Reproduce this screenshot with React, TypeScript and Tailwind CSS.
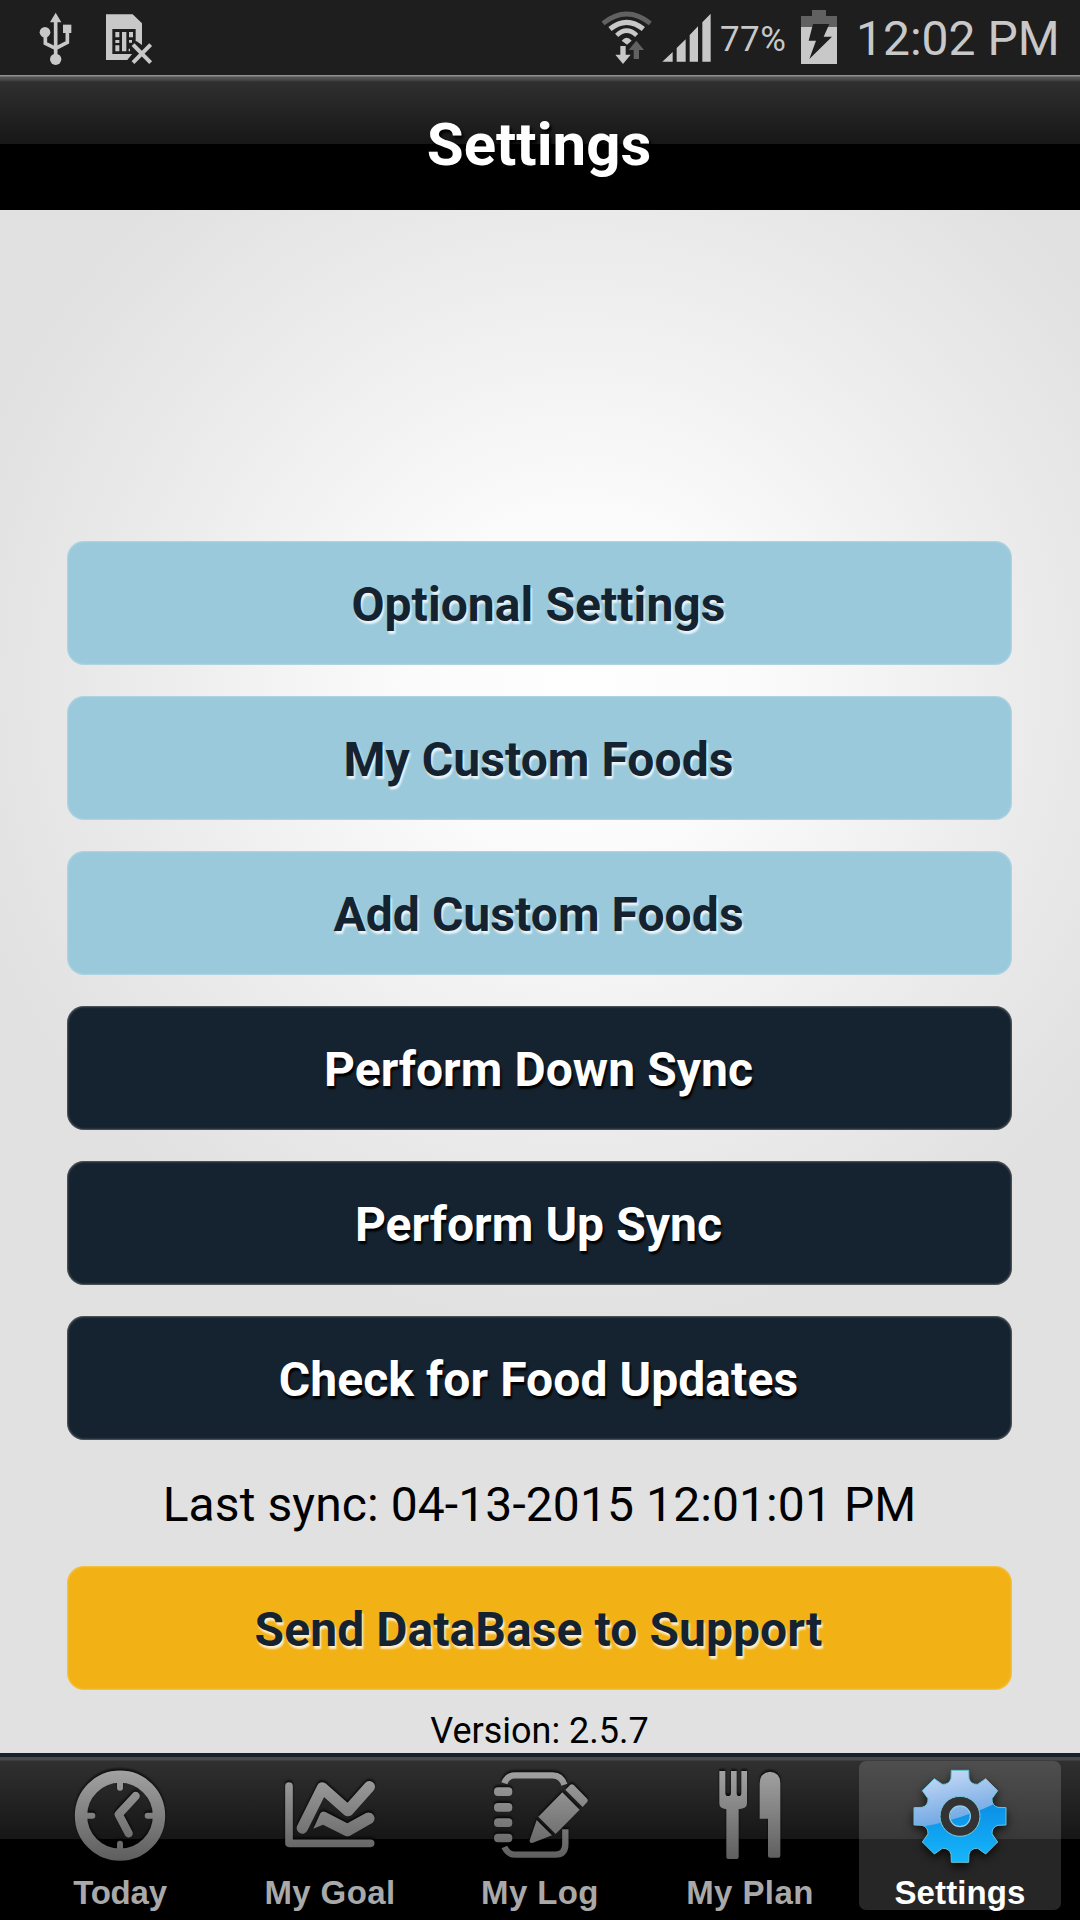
import React from "react";

type Tone = "blue" | "navy" | "amber";

const tones: Record<Tone, string> = {
  blue: "bg-[#99c9db] text-[#152330] [text-shadow:1.5px_2.5px_2px_rgba(255,255,255,0.8)] shadow-[inset_0_0_2px_1px_rgba(255,255,255,0.25)]",
  navy: "bg-[#152330] text-white [text-shadow:1.5px_2.5px_2px_#000] shadow-[inset_0_0_2px_1px_rgba(160,155,150,0.5)]",
  amber:
    "bg-[#f2b215] text-[#152330] [text-shadow:1.5px_2.5px_2px_rgba(255,255,255,0.8)] shadow-[inset_0_0_2px_1px_rgba(255,255,255,0.25)]",
};

function ActionButton({ tone, children }: { tone: Tone; children: React.ReactNode }) {
  return (
    <button
      className={`flex h-[124px] w-full shrink-0 items-center justify-center whitespace-nowrap rounded-[17px] pr-[2px] pt-[3px] text-[48px] font-bold leading-none tracking-[0.07px] ${tones[tone]}`}
    >
      {children}
    </button>
  );
}

function UsbIcon() {
  return (
    <svg className="h-14 w-9" viewBox="114 33 108 168" fill="none" stroke="#c8c8c8" strokeWidth="11">
      <path d="M167 60V170M136 100V130L167 145L202 127V92" />
      <path d="M167 38L184 67H150Z" fill="#c8c8c8" stroke="none" />
      <circle cx="135" cy="97" r="16" fill="#c8c8c8" stroke="none" />
      <rect x="189" y="74" width="25" height="25" fill="#c8c8c8" stroke="none" />
      <circle cx="167" cy="178" r="17" fill="#c8c8c8" stroke="none" />
    </svg>
  );
}

function SimOffIcon() {
  return (
    <svg className="h-[52px] w-12" viewBox="315 39 144 156">
      <path d="M318 43H398L426 70V135L410 124L397 124L394 130L398 160L382 180H318Z" fill="#c8c8c8" />
      <rect x="337" y="87" width="70" height="75" fill="#1e1e1e" />
      <path
        d="M346 96h12v16h-12zM346 120h12v9h-12zM346 136h12v18h-12zM366 96h13v58h-13zM387 96h12v16h-12zM387 120h9v8h-9zM386 146h4v8h-4z"
        fill="#c8c8c8"
      />
      <path d="M400 133L452 188M452 133L400 188" stroke="#1e1e1e" strokeWidth="20" />
      <path d="M399 134L452 188M452 134L399 188" stroke="#c8c8c8" strokeWidth="12" />
    </svg>
  );
}

function WifiIcon() {
  return (
    <svg className="h-[55px] w-[52px]" viewBox="64 30 156 165" fill="none">
      <path d="M70 70Q141 14 212 70" stroke="#616161" strokeWidth="14" />
      <path d="M91 87Q141 47 191 87" stroke="#c8c8c8" strokeWidth="15" />
      <path d="M111 106Q141 78 171 106" stroke="#c8c8c8" strokeWidth="14" />
      <path d="M126 122Q141 105 156 122L142 134Z" fill="#c8c8c8" />
      <path d="M122 138h16v26h15L130 192L107 164h15z" fill="#c8c8c8" />
      <path d="M170 122L193 150H178V177H162V150H147Z" fill="#616161" />
    </svg>
  );
}

function SignalIcon() {
  return (
    <svg className="h-[49px] w-[49px]" viewBox="247 40 147 147" fill="#c8c8c8">
      <path d="M248 186L279 157V186ZM291 145L318 119V186H291ZM330 106L355 80V186H330ZM368 68L393 42V186H368Z" />
    </svg>
  );
}

function BatteryIcon() {
  return (
    <svg className="h-[54px] w-9" viewBox="663 30 108 162">
      <path d="M696 30H738V48H771V81H663V48H696Z" fill="#616161" />
      <rect x="663" y="81" width="108" height="111" fill="#c8c8c8" />
      <path d="M699 72H748L731 110H756L688 177L708 122H686Z" fill="#1e1e1e" />
    </svg>
  );
}

function Metal({ id }: { id: string }) {
  return (
    <defs>
      <linearGradient id={id} gradientUnits="userSpaceOnUse" x1="0" y1="90" x2="0" y2="360">
        <stop offset="0" stopColor="#a2a2a2" />
        <stop offset="1" stopColor="#5e5e5e" />
      </linearGradient>
    </defs>
  );
}

const iconClass = "h-[100px] w-[100px] shrink-0 [filter:drop-shadow(0_-2px_1px_rgba(0,0,0,0.75))]";

function TodayIcon() {
  return (
    <svg className={iconClass} viewBox="210 78 300 300" fill="none" stroke="url(#m1)">
      <Metal id="m1" />
      <circle cx="360" cy="227" r="117" strokeWidth="37" />
      <path
        d="M351 120H369V143A9 9 0 0 1 351 143ZM351 334H369V311A9 9 0 0 0 351 311ZM255 218V236H277A9 9 0 0 0 277 218ZM465 218V236H443A9 9 0 0 1 443 218Z"
        fill="url(#m1)"
        stroke="none"
      />
      <path d="M407 168L356 223L386 280" strokeWidth="25" strokeLinecap="round" strokeLinejoin="round" />
    </svg>
  );
}

function GoalIcon() {
  return (
    <svg className={iconClass} viewBox="150 78 300 300" fill="none" stroke="url(#m2)" strokeLinecap="round" strokeLinejoin="round">
      <Metal id="m2" />
      <path d="M177 138V310H422" strokeWidth="23" />
      <path d="M217 264L277 144L354 212L418 140" strokeWidth="34" />
      <path
        d="M250 266L271 220Q277 211 288 217L352 250L408 219C426 211 443 233 428 248L360 287Q353 291 345 287L279 254Z"
        fill="url(#m2)"
        stroke="none"
      />
    </svg>
  );
}

function LogIcon() {
  return (
    <svg className={iconClass} viewBox="150 78 300 300" fill="url(#m3)">
      <Metal id="m3" />
      <path
        d="M193 130Q201 106 225 106H338Q364 106 373 134M193 321Q204 344 225 344H346Q376 344 376 312V268"
        fill="none"
        stroke="url(#m3)"
        strokeWidth="19"
      />
      <rect x="162" y="142" width="55" height="26" rx="12" />
      <rect x="162" y="189" width="55" height="26" rx="12" />
      <rect x="162" y="235" width="55" height="26" rx="12" />
      <rect x="162" y="281" width="55" height="26" rx="12" />
      <path d="M376 149L390 135Q396 130 402 136L440 175Q446 181 441 187L428 201Z" />
      <path d="M367 157L419 209L347 282L295 230Z" />
      <path d="M290 240L336 286L277 309Q268 310 269 301Z" />
    </svg>
  );
}

function PlanIcon() {
  return (
    <svg className={iconClass} viewBox="150 78 300 300" fill="url(#m4)">
      <Metal id="m4" />
      <path d="M208 93H226V158Q226 168 234 168Q243 168 243 158V93H260V158Q260 168 267 168Q274 168 274 158V93H291V190Q291 206 266 208V350Q266 357 258 357H237Q229 357 229 350V208Q208 206 208 190Z" />
      <path d="M329 236V130Q330 97 360 95Q391 97 391 130V347Q391 353 385 353H360Q354 353 354 347V236Z" />
    </svg>
  );
}

const gearPath =
  "M-26-138H26L27-114Q32-95 53-96L77-113L113-77L96-53Q95-32 114-27L138-26V26L114 27Q95 32 96 53L113 77L77 113L53 96Q32 95 27 114L26 138H-26L-27 114Q-32 95-53 96L-77 113L-113 77L-96 53Q-95 32-114 27L-138 26V-26L-114-27Q-95-32-96-53L-113-77L-77-113L-53-96Q-32-95-27-114Z";

function GearIcon() {
  return (
    <svg
      className="h-[100px] w-[100px] shrink-0 overflow-visible [filter:drop-shadow(0_4px_5px_rgba(0,0,0,0.7))]"
      viewBox="-150 -151 300 300"
    >
      <defs>
        <linearGradient id="gloss" x1="0" y1="0" x2="0.3" y2="1">
          <stop offset="0" stopColor="#d0e0f8" />
          <stop offset="0.65" stopColor="#86b4e8" />
          <stop offset="1" stopColor="#5b9fe2" />
        </linearGradient>
        <linearGradient id="deep" x1="0" y1="0" x2="0" y2="1">
          <stop offset="0" stopColor="#0a8be4" />
          <stop offset="1" stopColor="#16b6fb" />
        </linearGradient>
        <clipPath id="gear">
          <path d={gearPath} />
        </clipPath>
      </defs>
      <g clipPath="url(#gear)">
        <rect x="-140" y="-140" width="280" height="200" fill="url(#gloss)" />
        <path d="M-140 36Q0 14 140-54V140H-140Z" fill="url(#deep)" />
      </g>
      <path d={gearPath} fill="none" stroke="#6cc4d8" strokeWidth="3" />
      <circle r="45" fill="none" stroke="#333333" strokeWidth="30" />
      <circle r="60" fill="none" stroke="#78cfe0" strokeWidth="3" />
      <circle r="31" fill="none" stroke="#8fd0ec" strokeWidth="4" />
    </svg>
  );
}

function Tab({
  label,
  active,
  tracking = "tracking-[0.4px]",
  children,
}: {
  label: string;
  active?: boolean;
  tracking?: string;
  children: React.ReactNode;
}) {
  return (
    <div
      className={`flex h-[149px] w-[202px] flex-col items-center rounded-[7px] pt-[5px] font-['Liberation_Sans',sans-serif] text-[33px] font-bold leading-[34px] ${tracking} ${
        active ? "bg-white/15 text-white" : "text-[#a9a9a9]"
      }`}
    >
      {children}
      <span className="mt-[10px] whitespace-nowrap">{label}</span>
    </div>
  );
}

export default function App() {
  return (
    <div className="flex h-[1920px] w-[1080px] flex-col overflow-hidden bg-black font-['Roboto',sans-serif]">
      <div className="flex h-[75px] shrink-0 bg-[#1e1e1e] text-[#c8c8c8]">
        <div className="ml-[38px] mt-[11px]">
          <UsbIcon />
        </div>
        <div className="ml-[31px] mt-[13px]">
          <SimOffIcon />
        </div>
        <div className="ml-auto mt-[10px]">
          <WifiIcon />
        </div>
        <div className="ml-[9px] mt-[13px]">
          <SignalIcon />
        </div>
        <span className="ml-[9px] mt-[20px] w-[81px] whitespace-nowrap text-[35px] leading-10 tracking-[0.4px]">77%</span>
        <div className="mt-[10px]">
          <BatteryIcon />
        </div>
        <span className="ml-[19px] mt-[14px] w-[224px] whitespace-nowrap text-[48px] leading-[50px]">12:02 PM</span>
      </div>

      <header className="flex h-[135px] shrink-0 items-center justify-center bg-[linear-gradient(#8f8f8f_0,#8f8f8f_1px,#565656_2px,#484848_5px,#2f2f2f_7px,#171717_69px,#000_69px)] pr-[2px] pt-1 text-[60px] font-bold leading-none text-white [text-shadow:2px_3px_3px_#000]">
        <h1>Settings</h1>
      </header>

      <main className="flex h-[1543px] shrink-0 flex-col items-center bg-[radial-gradient(circle_at_580px_475px,#fefefe_0,#fbfbfb_170px,#ebebeb_450px,#e1e1e1_640px)] pl-[67px] pr-[68px] pt-[331px] text-black">
        <div className="flex w-full flex-col gap-[31px]">
          <ActionButton tone="blue">Optional Settings</ActionButton>
          <ActionButton tone="blue">My Custom Foods</ActionButton>
          <ActionButton tone="blue">Add Custom Foods</ActionButton>
          <ActionButton tone="navy">Perform Down Sync</ActionButton>
          <ActionButton tone="navy">Perform Up Sync</ActionButton>
          <ActionButton tone="navy">Check for Food Updates</ActionButton>
        </div>
        <p className="flex h-[126px] shrink-0 items-center whitespace-nowrap pt-[3px] text-[48px] leading-none tracking-[0.1px]">
          Last sync: 04-13-2015 12:01:01 PM
        </p>
        <ActionButton tone="amber">Send DataBase to Support</ActionButton>
        <p className="mt-[23px] text-[36px] leading-9">Version: 2.5.7</p>
      </main>

      <nav className="flex h-[167px] shrink-0 items-start justify-center gap-2 bg-[linear-gradient(#18222c_0,#18222c_4px,#4a4a4a_4px,#4a4a4a_7px,#303030_8px,#161616_86px,#000_86px)] pt-2">
        <Tab label="Today" tracking="tracking-[-0.2px]">
          <TodayIcon />
        </Tab>
        <Tab label="My Goal">
          <GoalIcon />
        </Tab>
        <Tab label="My Log">
          <LogIcon />
        </Tab>
        <Tab label="My Plan">
          <PlanIcon />
        </Tab>
        <Tab label="Settings" active tracking="tracking-[0.1px]">
          <GearIcon />
        </Tab>
      </nav>
    </div>
  );
}
